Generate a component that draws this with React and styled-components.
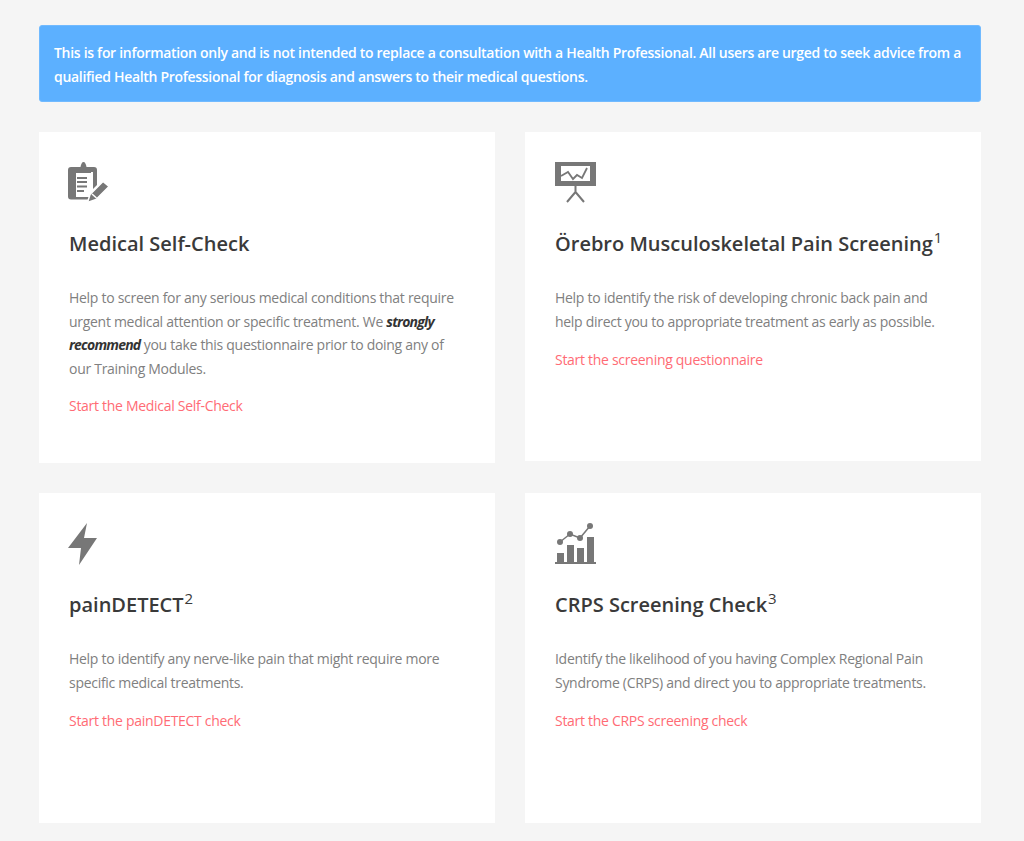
import styled, { createGlobalStyle } from "styled-components";

const Global = createGlobalStyle`
  html, body {
    margin: 0;
    background: #f5f5f5;
    font-family: "Open Sans", sans-serif;
  }
`;
const Page = styled.div`
  width: 942px;
  margin-left: 39px;
  padding: 25px 0 18px;
`;
const Notice = styled.div`
  box-sizing: border-box;
  height: 77px;
  padding: 15px 14px;
  background: #5cb0ff;
  border: 1px solid #71baff;
  border-radius: 3px;
  color: #fff;
  font-size: 14px;
  font-weight: 600;
  line-height: 24px;
  letter-spacing: -0.3px;
  margin-bottom: 30px;
`;
const Grid = styled.div`
  display: grid;
  grid-template-columns: 456px 456px;
  column-gap: 30px;
  row-gap: 30px;
  align-items: start;
`;
const Card = styled.div`
  box-sizing: border-box;
  background: #fff;
  padding: 30px;
  height: ${(p) => p.$height}px;
`;
const IconBox = styled.div`
  height: 40px;
  margin-bottom: 27px;
  svg {
    display: block;
    overflow: visible;
  }
`;
const Title = styled.h3`
  margin: 0 0 27px;
  font-size: 20px;
  font-weight: 600;
  line-height: 30px;
  color: #3a3a3a;
  sup {
    font-size: 15px;
    font-weight: 500;
    line-height: 0;
    vertical-align: baseline;
    position: relative;
    top: -8px;
    margin-left: 1px;
  }
`;
const Text = styled.p`
  margin: 0 0 14px;
  font-size: 14px;
  line-height: ${(p) => p.$lineHeight || 24}px;
  letter-spacing: -0.29px;
  color: #808080;
  strong {
    color: #333;
    font-weight: 700;
    font-style: italic;
    letter-spacing: -0.8px;
  }
`;
const StartLink = styled.a`
  display: block;
  font-size: 14px;
  line-height: 24px;
  letter-spacing: -0.29px;
  color: #ff6b75;
  text-decoration: none;
`;

const ClipboardIcon = () => (
  <svg width="41" height="40" viewBox="0 0 41 40" fill="#777">
    <path d="M2 5h5v30h14l-1 2.500H2a3 3 0 0 1-3-3V8a3 3 0 0 1 3-3z" />
    <path d="M22 5h3a3 3 0 0 1 3 3v15l-4 4V10h-2z" />
    <path d="M7 5h4.500C12 2 13 0 14.500 0S17 2 17.500 5H22v6H7z" />
    <path d="M8 15h10v2H8zM8 19h10v2H8zM8 23.500h10v2H8zM8 28h7v2H8z" />
    <path stroke="#fff" strokeWidth="1.500" d="M18.500 40.500l2.500-8 13-13 6 5-13 13z" />
    <path fill="#fff" d="M22.500 32.500l1-1 4.500 4-1 1z" />
  </svg>
);
const ScreenIcon = () => (
  <svg width="41" height="40" viewBox="0 0 41 40">
    <path fill="#777" fillRule="evenodd" d="M0 0h41v24H0zM6 4v15h29V4z" />
    <path fill="none" stroke="#777" strokeWidth="1.800" d="M6 14l7-4 5 7 4-4 5 3 5-10" />
    <path fill="none" stroke="#777" strokeWidth="2" d="M20.500 24v6M20.500 30l-8.500 10M20.500 30l8.500 10" />
  </svg>
);
const BoltIcon = () => (
  <svg width="30" height="42" viewBox="0 0 30 42" fill="#777">
    <path d="M18 0L-1 25h13L10 42 28 15H15z" />
  </svg>
);
const ChartIcon = () => (
  <svg width="41" height="41" viewBox="0 0 41 41">
    <path fill="#777" d="M2 30h7v10H2zM12 22h7v18h-7zM22 25h7v15h-7zM32 14h7v26h-7zM0 39h41v2H0z" />
    <path fill="none" stroke="#777" strokeWidth="1.500" d="M5 19l10-8 10 4 10-12" />
    <circle cx="5" cy="19" r="3" fill="#777" />
    <circle cx="15" cy="11" r="3" fill="#777" />
    <circle cx="25" cy="15" r="3" fill="#777" />
    <circle cx="35" cy="3" r="3" fill="#777" />
  </svg>
);

export default function App() {
  return (
    <Page>
      <Global />
      <Notice>
        This is for information only and is not intended to replace a consultation with a Health Professional. All users are urged to seek advice from a qualified Health Professional for diagnosis and answers to their medical questions.
      </Notice>
      <Grid>
        <Card $height={331}>
          <IconBox><ClipboardIcon /></IconBox>
          <Title>Medical Self-Check</Title>
          <Text $lineHeight={23.5}>
            Help to screen for any serious medical conditions that require urgent medical attention or specific treatment. We <strong>strongly recommend</strong> you take this questionnaire prior to doing any of our Training Modules.
          </Text>
          <StartLink href="#">Start the Medical Self-Check</StartLink>
        </Card>
        <Card $height={329}>
          <IconBox><ScreenIcon /></IconBox>
          <Title>Örebro Musculoskeletal Pain Screening<sup>1</sup></Title>
          <Text>
            Help to identify the risk of developing chronic back pain and help direct you to appropriate treatment as early as possible.
          </Text>
          <StartLink href="#">Start the screening questionnaire</StartLink>
        </Card>
        <Card $height={330}>
          <IconBox><BoltIcon /></IconBox>
          <Title>painDETECT<sup>2</sup></Title>
          <Text>
            Help to identify any nerve-like pain that might require more specific medical treatments.
          </Text>
          <StartLink href="#">Start the painDETECT check</StartLink>
        </Card>
        <Card $height={330}>
          <IconBox><ChartIcon /></IconBox>
          <Title>CRPS Screening Check<sup>3</sup></Title>
          <Text>
            Identify the likelihood of you having Complex Regional Pain Syndrome (CRPS) and direct you to appropriate treatments.
          </Text>
          <StartLink href="#">Start the CRPS screening check</StartLink>
        </Card>
      </Grid>
    </Page>
  );
}
